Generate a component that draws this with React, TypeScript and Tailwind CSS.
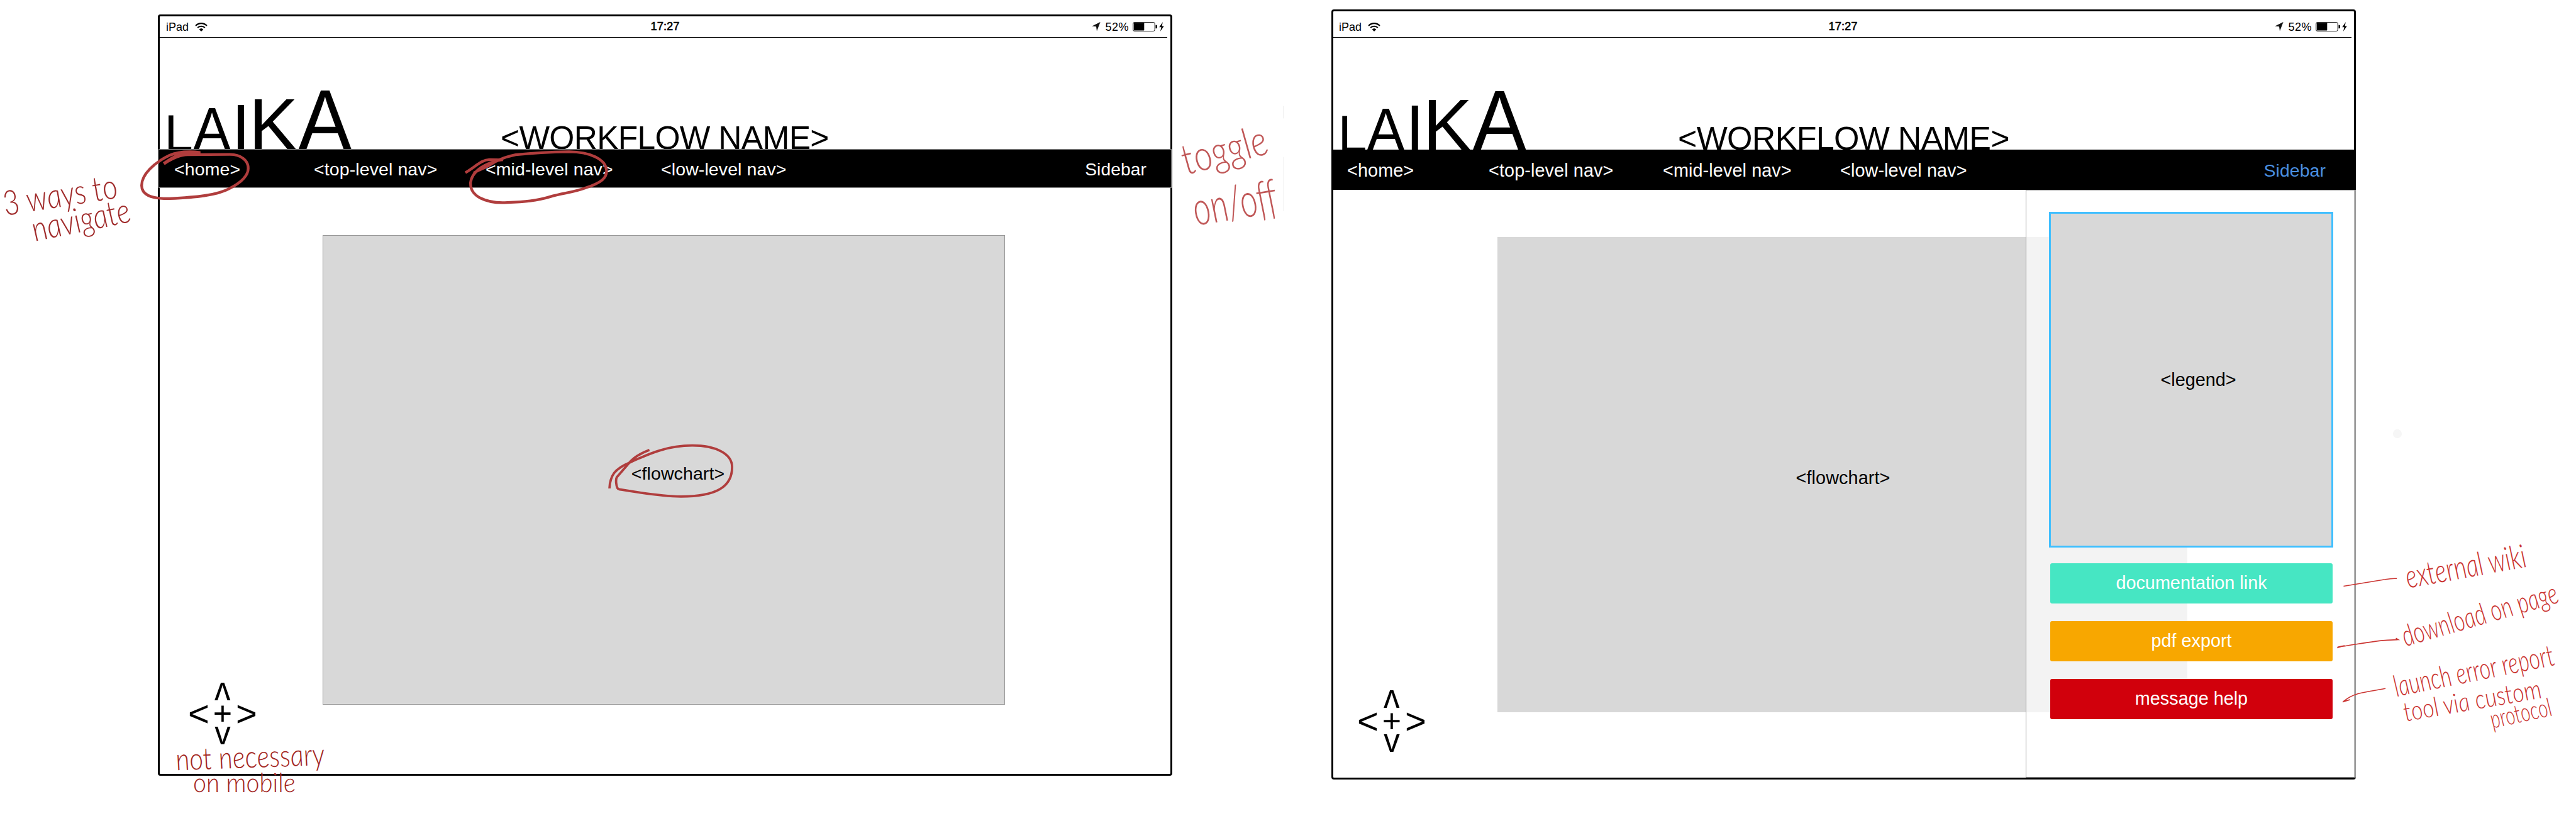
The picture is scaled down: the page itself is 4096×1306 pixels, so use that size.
import React from "react";

const FONT = "font-['Liberation_Sans',Arial,sans-serif]";

function WifiIcon() {
  return (
    <svg viewBox="0 0 25 18" className="h-[14px] w-[20px]" fill="none" stroke="#000" strokeWidth="2.6">
      <path d="M1 6.4C7.500-0.200 17.500-0.200 24 6.400" />
      <path d="M5 10.400C9.200 6.200 15.800 6.200 20 10.400" />
      <path d="M8.300 14C10.500 11.300 14.500 11.300 16.700 14L12.500 18Z" fill="#000" stroke="none" />
    </svg>
  );
}

function LocationIcon() {
  return (
    <svg viewBox="0 0 18 19" className="h-[15px] w-[14px]">
      <path d="M17.500 0L0 8.600L9 9.300L10.300 18.500Z" fill="#111" />
    </svg>
  );
}

function BatteryIcon() {
  return (
    <svg viewBox="0 0 49 19" className="h-[15px] w-[39px]">
      <rect x="0.600" y="0.600" width="43.800" height="17.800" rx="3" fill="none" stroke="#000" strokeWidth="1.200" />
      <rect x="2" y="2" width="21" height="15" rx="1" fill="#000" />
      <path d="M46 6H47.500Q49 6 49 7.500V11.500Q49 13 47.500 13H46Z" fill="#000" />
    </svg>
  );
}

function BoltIcon() {
  return (
    <svg viewBox="0 0 10 20" className="h-[15px] w-[8px]">
      <path d="M7.500 0L0 11H4.300L2.300 20L10 8.500H5.700Z" fill="#000" />
    </svg>
  );
}

function StatusBar({ className }: { className: string }) {
  return (
    <div className={`flex items-center border-b border-black text-[18px] leading-none ${className}`}>
      <div className="flex flex-1 items-center gap-[10px]">
        <span>iPad</span>
        <WifiIcon />
      </div>
      <span className="text-[18.400px] [-webkit-text-stroke:0.600px_black]">17:27</span>
      <div className="flex flex-1 items-center justify-end">
        <LocationIcon />
        <span className="ml-[7px] mr-[6px] tracking-[0.5px]">52%</span>
        <BatteryIcon />
        <span className="ml-[3px]">
          <BoltIcon />
        </span>
      </div>
    </div>
  );
}

function Logo({ className }: { className: string }) {
  return (
    <svg viewBox="0 0 300 177" className={`shrink-0 overflow-visible font-['Liberation_Sans',Arial,sans-serif] ${className}`}>
      <text x="-6.700" y="180" fontSize="82">L</text>
      <text x="38.400" y="180" fontSize="98" textLength="61" lengthAdjust="spacingAndGlyphs">A</text>
      <text x="100.300" y="180" fontSize="106">I</text>
      <text x="127.400" y="180" fontSize="118">K</text>
      <text x="205.400" y="180" fontSize="139" textLength="86.500" lengthAdjust="spacingAndGlyphs">A</text>
    </svg>
  );
}

function Compass() {
  return (
    <div className="grid w-[114px] grid-cols-[38px_38px_38px] grid-rows-[32px_32px_32px] place-items-center text-[51px] leading-[32px]">
      <span className="col-start-2 rotate-180">v</span>
      <span className="col-start-1 row-start-2 text-[58px]">&lt;</span>
      <span className="col-start-2 row-start-2 text-[52px]">+</span>
      <span className="col-start-3 row-start-2 text-[58px]">&gt;</span>
      <span className="col-start-2 row-start-3">v</span>
    </div>
  );
}

function Note({
  x,
  y,
  angle,
  size,
  length,
  color,
  children,
}: {
  x: number;
  y: number;
  angle: number;
  size: number;
  length: number;
  color: string;
  children: string;
}) {
  return (
    <text
      transform={`translate(${x} ${y}) rotate(${angle}) skewX(7)`}
      fontSize={size}
      textLength={length}
      lengthAdjust="spacingAndGlyphs"
      fill={color}
    >
      {children}
    </text>
  );
}

function Annotations() {
  return (
    <svg
      viewBox="0 0 5220 1664"
      preserveAspectRatio="none"
      className="pointer-events-none absolute inset-0 h-[1306px] w-[4096px] font-['Lato','Open_Sans',sans-serif] font-light italic"
    >
      <g fill="none" stroke="#b03d3d" strokeWidth="5.500">
        <path strokeWidth="6.500" d="M332 332C352 317 366 311 378 310.500L406 311" />
        <path d="M406 309C380 306 357 309 343 315C312 330 287 354 287 376C287 394 304 403 344 402.500C395 400 440 396 465 382C492 368 503 354 503 341C503 325 488 313 466 313L380 313.500C362 314 346 324 332 331" />
        <path d="M943 350C965 337 975 324 992 323.500L1019 324" />
        <path d="M1019 323C985 330 957 345 953.500 370C952 398 985 413 1028 410.500C1062 409 1088 407 1114 399C1142 391 1162 390 1186 381C1220 370 1230 360 1229 345C1227 322 1196 308 1153 307.500C1122 308 1080 310 1045 313.500C1022 318 1003 327 990 336C978 342 966 346 960 351" />
        <path strokeWidth="4.800" d="M1316 912C1297 919 1285 926 1275 938L1250 967C1247 973 1249 985 1251 989Q1253 992 1259 992.500C1310 1001 1346 1006 1380 1006.500C1450 1006 1484 988 1483.500 946C1483 920 1451 903 1403 903C1354 903 1318 918 1275 938C1246 950 1236 964 1235 990" />
      </g>
      <g fill="none" stroke="#cb3532" strokeWidth="2">
        <path d="M4749 1188L4833 1174.500Q4846 1172 4857 1172.500" />
        <path d="M4736 1313L4751 1308.500L4737 1311.500C4765 1308 4815 1298 4837 1297.500L4860 1296.500L4855 1293.500" />
        <path d="M4747 1423L4762 1418L4749 1421.500C4767 1406 4782 1404 4834 1395.500" />
      </g>
      <Note x={12} y={437} angle={-9} size={70} length={234} color="#a02b2b">3 ways to</Note>
      <Note x={72} y={489} angle={-11.500} size={70} length={202} color="#a02b2b">navigate</Note>
      <Note x={2406} y={354} angle={-14.500} size={86} length={176} color="#c05757">toggle</Note>
      <Note x={2426} y={457} angle={-9.300} size={96} length={172} color="#c05757">on/off</Note>
      <Note x={359} y={1561} angle={-2} size={62} length={302} color="#a32622">not necessary</Note>
      <Note x={393} y={1605} angle={0} size={54} length={208} color="#a32622">on mobile</Note>
      <Note x={4881} y={1192} angle={-10.200} size={66} length={247} color="#cb3532">external wiki</Note>
      <Note x={4876} y={1310} angle={-16} size={60} length={326} color="#cb3532">download on page</Note>
      <Note x={4857} y={1412} angle={-11.300} size={60} length={330} color="#cb3532">launch error report</Note>
      <Note x={4876} y={1462} angle={-9.800} size={54} length={282} color="#cb3532">tool via custom</Note>
      <Note x={5052} y={1476} angle={-12} size={52} length={126} color="#cb3532">protocol</Note>
      <circle cx="4858" cy="879" r="9" fill="#f6f6f6" />
      <rect x="2600.500" y="215" width="1" height="25" fill="#e4e4e4" />
      <rect x="2600.500" y="318" width="1" height="110" fill="#ececec" />
    </svg>
  );
}

const actions = [
  { label: "documentation link", tone: "bg-[#46e6c3]" },
  { label: "pdf export", tone: "bg-[#f8a700]" },
  { label: "message help", tone: "bg-[#d1000c]" },
];

export default function App() {
  return (
    <div className={`relative flex h-[1306px] w-[4096px] items-start overflow-hidden bg-white text-black ${FONT}`}>
      {/* Tablet with the sidebar closed */}
      <section className="ml-[251px] mt-[23px] flex h-[1211px] w-[1613px] shrink-0 flex-col rounded-[4px] border-[3px] border-black">
        <StatusBar className="mr-[5px] h-[34px] shrink-0 pl-[10px] pr-[5px]" />
        <header className="flex h-[177px] shrink-0 items-end pl-[14px]">
          <Logo className="h-[177px] w-[300px]" />
          <h1 className="-mb-[8px] ml-[228px] whitespace-nowrap text-[51.500px] leading-none tracking-[-0.700px]">&lt;WORKFLOW NAME&gt;</h1>
        </header>
        <nav className="relative -mx-[2px] flex h-[62px] shrink-0 items-center border border-[#979797] bg-black pl-[24px] pr-[39px] pt-[2px] text-[28.500px] leading-none tracking-[0.100px] text-white">
          <a className="w-[222px]">&lt;home&gt;</a>
          <a className="w-[273px]">&lt;top-level nav&gt;</a>
          <a className="w-[279px]">&lt;mid-level nav&gt;</a>
          <a className="flex-1">&lt;low-level nav&gt;</a>
          <a className="text-[28.200px]">Sidebar</a>
        </nav>
        <main className="flex flex-1 items-start">
          <div className="flex h-full w-[259px] shrink-0 flex-col justify-end pb-[48px] pl-[43px]">
            <Compass />
          </div>
          <figure className="mt-[75px] flex h-[747px] w-[1085px] items-center justify-center border border-[#979797] bg-[#d8d8d8] pl-[45px] pt-[11px] text-[28.500px] leading-none tracking-[0.100px]">
            &lt;flowchart&gt;
          </figure>
        </main>
      </section>

      {/* Tablet with the sidebar open */}
      <section className="ml-[253px] mt-[15px] flex h-[1225px] w-[1629px] shrink-0 flex-col rounded-[4px] border-[3px] border-black">
        <StatusBar className="mr-[4px] h-[42px] shrink-0 pl-[9px] pr-[7px] pt-[8px]" />
        <header className="flex h-[178px] shrink-0 items-end pl-[14px]">
          <Logo className="h-[178px] w-[302px]" />
          <h1 className="-mb-[8px] ml-[232px] whitespace-nowrap text-[52px] leading-none tracking-[-0.700px]">&lt;WORKFLOW NAME&gt;</h1>
        </header>
        <nav className="relative -mx-[3px] flex h-[64px] shrink-0 items-center bg-black pl-[25px] pr-[48px] pt-[2px] text-[28.800px] leading-none tracking-[0.100px] text-white">
          <a className="w-[225px]">&lt;home&gt;</a>
          <a className="w-[277px]">&lt;top-level nav&gt;</a>
          <a className="w-[282px]">&lt;mid-level nav&gt;</a>
          <a className="flex-1">&lt;low-level nav&gt;</a>
          <a className="text-[28.400px] text-[#4a90e2]">Sidebar</a>
        </nav>
        <main className="relative flex flex-1 items-start">
          <div className="flex h-full w-[261px] shrink-0 flex-col justify-end pb-[42px] pl-[36px]">
            <Compass />
          </div>
          <figure className="mt-[75px] flex h-[756px] w-[1097px] items-center justify-center bg-[#d8d8d8] pl-[2px] pt-[11px] text-[28.800px] leading-none tracking-[0.100px]">
            &lt;flowchart&gt;
          </figure>
          <aside className="absolute -right-[3px] bottom-0 top-0 flex w-[525px] flex-col border border-[#979797] bg-white/70 pl-[36px] pt-[34px] text-[28.800px] leading-none">
            <div className="flex h-[534px] w-[452px] items-center justify-center border-[3px] border-[#40bfff] bg-[#d8d8d8] pl-[23px]">
              &lt;legend&gt;
            </div>
            <div className="ml-[2px] mt-[25px] flex w-[449px] flex-col gap-[28px] text-white">
              {actions.map((a) => (
                <button key={a.label} className={`flex h-[64px] items-center justify-center rounded-[3px] pb-[1px] ${a.tone}`}>
                  {a.label}
                </button>
              ))}
            </div>
          </aside>
        </main>
      </section>

      <Annotations />
    </div>
  );
}
